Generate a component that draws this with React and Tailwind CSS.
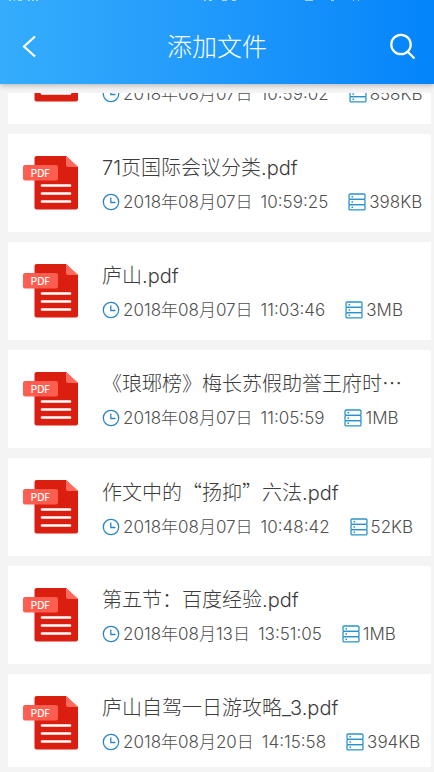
import clsx from "clsx";

const FILES = [
  { id: 1, name: "会议资料.pdf", date: "2018年08月07日", time: "10:59:02", size: "858KB" },
  { id: 2, name: "71页国际会议分类.pdf", date: "2018年08月07日", time: "10:59:25", size: "398KB" },
  { id: 3, name: "庐山.pdf", date: "2018年08月07日", time: "11:03:46", size: "3MB" },
  { id: 4, name: "《琅琊榜》梅长苏假助誉王府时⋯", date: "2018年08月07日", time: "11:05:59", size: "1MB" },
  { id: 5, name: "作文中的“扬抑”六法.pdf", date: "2018年08月07日", time: "10:48:42", size: "52KB" },
  { id: 6, name: "第五节：百度经验.pdf", date: "2018年08月13日", time: "13:51:05", size: "1MB" },
  { id: 7, name: "庐山自驾一日游攻略_3.pdf", date: "2018年08月20日", time: "14:15:58", size: "394KB" },
];

function PdfIcon({ hidden }) {
  return (
    <span className="relative block h-[54px] w-[56px] shrink-0">
      <svg viewBox="0 0 56 54" className="h-full w-full" aria-hidden="true">
        <path d="M13.500 0H43l12 11v40.500a2 2 0 0 1-2 2H13.500a2 2 0 0 1-2-2V2a2 2 0 0 1 2-2z" fill="#da1f10" />
        <path d="M43 0l12 11H45a2 2 0 0 1-2-2z" fill="#ff6a5c" />
        <path d="M19 29.500h28M19 37.500h28M19 45.500h28" stroke="#fff" strokeWidth="2.600" strokeLinecap="round" />
        <rect x="0" y="9" width="35" height="15.500" rx="2" fill="#ff5d50" />
      </svg>
      <span
        className={clsx(
          "absolute left-0 top-[9px] w-[35px] text-center text-[10px] font-medium leading-[16px] text-white",
          hidden && "invisible",
        )}
      >
        PDF
      </span>
    </span>
  );
}

function ClockIcon() {
  return (
    <svg viewBox="0 0 18 18" className="h-[18px] w-[18px] shrink-0" fill="none" stroke="#2a87c5" aria-hidden="true">
      <circle cx="9" cy="9" r="7.700" strokeWidth="1.300" />
      <path d="M8.800 4.500v5h4.600" strokeWidth="1.300" />
    </svg>
  );
}

function StorageIcon() {
  return (
    <svg viewBox="0 0 18 18" className="h-[18px] w-[18px] shrink-0" fill="none" stroke="#2a92c8" aria-hidden="true">
      <rect x="1" y="1" width="16" height="5.300" rx="1.200" strokeWidth="1.300" />
      <rect x="1" y="6.300" width="16" height="5.300" rx="1.200" strokeWidth="1.300" />
      <rect x="1" y="11.600" width="16" height="5.300" rx="1.200" strokeWidth="1.300" />
      <path d="M3.500 3.700h1.600M3.500 9h1.600M3.500 14.300h1.600" strokeWidth="1.500" />
    </svg>
  );
}

// Lower edge of the system status bar, the rest is off screen
function StatusBarEdge() {
  return (
    <svg viewBox="0 0 434 2" className="h-[2px] w-full shrink-0" stroke="#fff" strokeOpacity="0.6" aria-hidden="true">
      <path d="M9 .5h2M14 .5h1M18 .5h4M28 .5h2M32 .5h2M36 .5h2" />
      <path d="M204 .5h2M209 .5h3M222 .5h5M232 .5h4" />
      <path d="M305 .5h8M331 .5h3M353 .5h1M358 .5h1" />
    </svg>
  );
}

// Chinese quotes need the full-width glyphs of the CJK face
function FileName({ text }) {
  return text.split(/([“”])/).map((part, i) =>
    part === "“" || part === "”" ? (
      <span key={i} className="font-['Noto_Sans_CJK_SC',sans-serif]">
        {part}
      </span>
    ) : (
      part
    ),
  );
}

function FileRow({ file, scrolledOut }) {
  return (
    <li className={clsx("flex h-[98px] shrink-0 items-start bg-white pl-[15px] pt-[22px]", scrolledOut && "-mt-[67px]")}>
      <PdfIcon hidden={scrolledOut} />
      <div className="ml-[23px] min-w-0 flex-1">
        <p className={clsx("truncate text-[20px] leading-[24px] text-[#3c3c3c]", scrolledOut && "invisible")}>
          <FileName text={file.name} />
        </p>
        <div className="mt-[12px] flex items-center whitespace-nowrap text-[17px] leading-[20px] text-[#505050]">
          <ClockIcon />
          <span className="ml-[3px]">{file.date}</span>
          <span className="ml-2">{file.time}</span>
          <span className="ml-5 flex items-center gap-[3px]">
            <StorageIcon />
            {file.size}
          </span>
        </div>
      </div>
    </li>
  );
}

export default function App() {
  return (
    <div
      lang="zh-CN"
      className="flex h-screen flex-col overflow-hidden bg-[#f4f4f4] font-['Inter','Noto_Sans_CJK_SC',sans-serif] font-light"
    >
      <header className="z-10 flex h-[84px] shrink-0 flex-col bg-linear-to-r from-[#35adfc] to-[#0384fa] text-white shadow-[0_1px_6px_rgba(0,0,0,0.3)]">
        <StatusBarEdge />
        <div className="flex flex-1 items-center justify-between pl-[18px] pr-[18px] pt-2">
          <button type="button" aria-label="返回" className="w-7">
            <svg viewBox="0 0 28 28" className="h-7 w-7" fill="none" stroke="currentColor" strokeWidth="2.200">
              <path d="M17 3.500L6 13.500l11 10" />
            </svg>
          </button>
          <h1 className="text-[25px] leading-8">添加文件</h1>
          <button type="button" aria-label="搜索" className="w-7">
            <svg viewBox="0 0 28 28" className="h-7 w-7" fill="none" stroke="currentColor" strokeWidth="2.200">
              <circle cx="13" cy="11.500" r="9.700" />
              <path d="M19.500 18.500l7 7" />
            </svg>
          </button>
        </div>
      </header>
      <main className="mb-[5px] mt-[9px] min-h-0 flex-1 overflow-hidden pl-2 pr-[3px]">
        <ul className="flex flex-col gap-[10px]">
          {FILES.map((f, i) => (
            <FileRow key={f.id} file={f} scrolledOut={i === 0} />
          ))}
        </ul>
      </main>
    </div>
  );
}
